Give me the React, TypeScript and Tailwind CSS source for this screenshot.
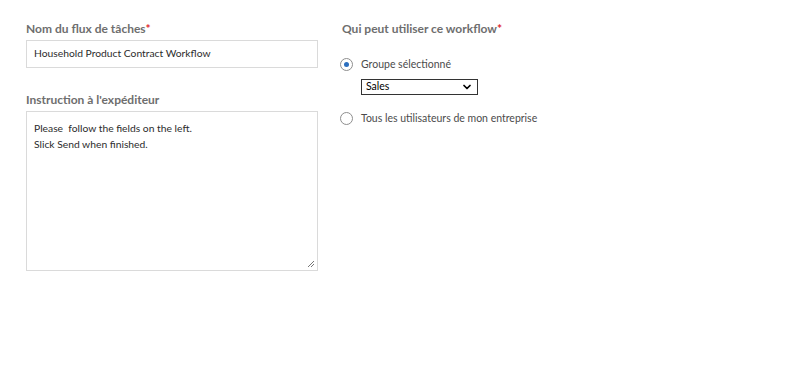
import { ChevronDown } from 'lucide-react';

function Radio({ checked }: { checked?: boolean }) {
  return (
    <span className="flex h-[13px] w-[13px] items-center justify-center rounded-full border border-[#8e8e8e] bg-white">
      {checked && <span className="h-[5px] w-[5px] rounded-full bg-[#2c6fbf]" />}
    </span>
  );
}

export default function App() {
  return (
    <div className="h-[372px] w-[795px] bg-white font-['Lato',sans-serif] text-[#2c2c2c]">
      <div className="flex gap-[24px] pl-[26px] pt-[20px]">
        {/* Left column */}
        <div className="flex w-[292px] flex-col">
          <label className="text-[12px] font-bold text-[#6e6e6e]">
            Nom du flux de tâches<span className="text-[#e0262f]">*</span>
          </label>
          <div className="mt-[2px] flex h-[28px] items-center border border-[#dadada] px-[7px] text-[10.3px]">
            Household Product Contract Workflow
          </div>

          <label className="mt-[23px] text-[12px] font-bold text-[#6e6e6e]">
            Instruction à l'expéditeur
          </label>
          <div className="relative mt-[2px] h-[160px] border border-[#dadada] px-[7px] pt-[8px] text-[10.3px] leading-[16px]">
            <div className="whitespace-pre">Please  follow the fields on the left.</div>
            <div>Slick Send when finished.</div>
            <svg className="absolute bottom-[2px] right-[2px]" width="9" height="9" viewBox="0 0 9 9">
              <path d="M8 2 L2 8 M8 5 L5 8" stroke="#777" strokeWidth="1" />
            </svg>
          </div>
        </div>

        {/* Right column */}
        <div className="flex flex-col">
          <label className="text-[12px] font-bold text-[#6e6e6e]">
            Qui peut utiliser ce workflow<span className="text-[#e0262f]">*</span>
          </label>
          <div className="-ml-[2px] mt-[19px] flex items-center gap-[8px]">
            <Radio checked />
            <span className="text-[10.5px] text-[#4b4b4b]">Groupe sélectionné</span>
          </div>
          <div className="ml-[19px] mt-[6px] flex h-[16px] w-[117px] items-center justify-between border border-[#333] px-[4px] text-[10.5px] text-black">
            <span>Sales</span>
            <ChevronDown size={12} strokeWidth={3.5} />
          </div>
          <div className="-ml-[2px] mt-[16px] flex items-center gap-[8px]">
            <Radio />
            <span className="text-[10.5px] text-[#4b4b4b]">Tous les utilisateurs de mon entreprise</span>
          </div>
        </div>
      </div>
    </div>
  );
}
